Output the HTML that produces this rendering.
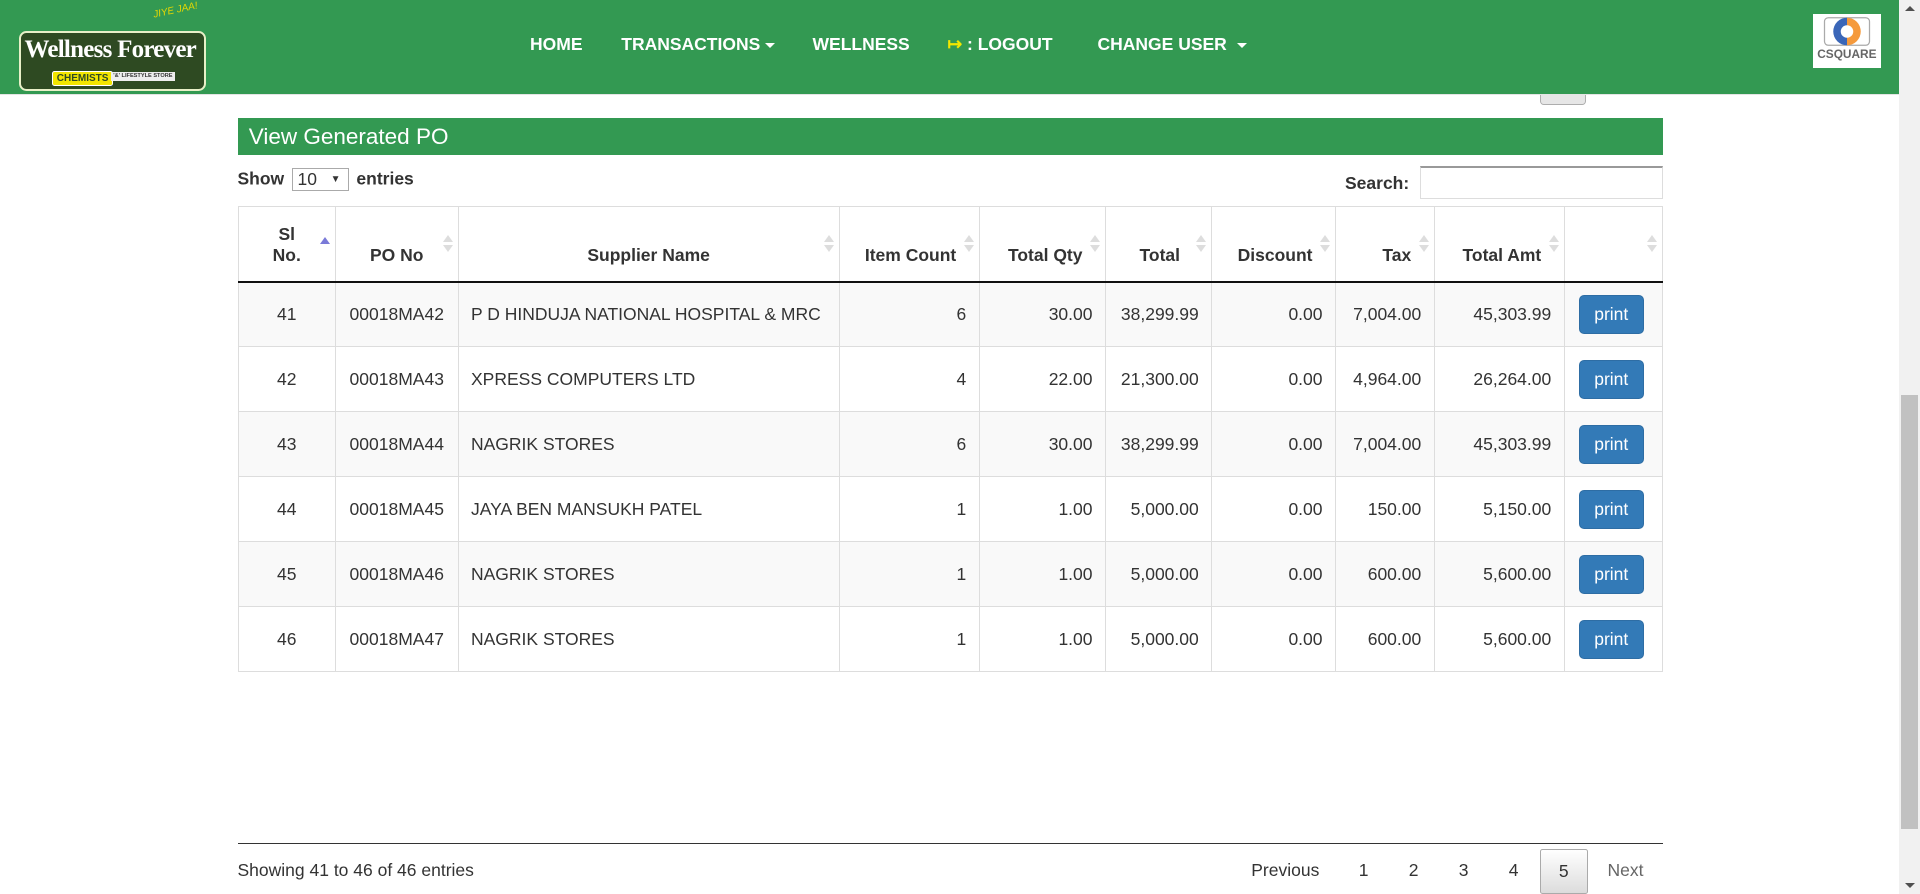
<!DOCTYPE html>
<html><head><meta charset="utf-8">
<style>
html,body{margin:0;padding:0;}
body{width:1536px;height:715px;overflow:hidden;zoom:1.25;font-family:"Liberation Sans",Arial,sans-serif;font-size:14px;color:#333;background:#fff;position:relative;}
.hdr{position:absolute;left:0;top:0;width:1519px;height:75px;background:#339952;border-bottom:1px solid #e4e4e4;z-index:2}
.logo{position:absolute;left:15px;top:25px;width:150px;height:48px;background:#2e4a22;border:2px solid #e8f0c8;border-radius:6px;box-sizing:border-box}
.logo .t{position:absolute;left:3px;top:2px;color:#fff;font-family:"Liberation Serif",serif;font-size:20px;font-weight:bold;white-space:nowrap;letter-spacing:-0.6px}
.logo .c{position:absolute;left:25px;top:30px;background:#f2e600;color:#2e4a22;font-weight:bold;font-size:8px;padding:1px 3px;border:1px solid #fff;border-radius:2px}
.logo .l{position:absolute;left:72px;top:31px;background:#eee;color:#333;font-size:4.5px;padding:1px 2px;font-weight:bold}
.dots{position:absolute;left:134px;top:18px}
.dots span{display:inline-block;width:6px;height:6px;border-radius:50%;margin-right:1px}
.jj{position:absolute;left:122px;top:4px;color:#e8d800;font-style:italic;font-size:8px;transform:rotate(-12deg)}
.nav{position:absolute;top:27px;color:#fff;font-weight:bold;font-size:14px;white-space:nowrap}
.caret{display:inline-block;border-top:4px solid #fff;border-left:4px solid transparent;border-right:4px solid transparent;vertical-align:middle;margin-left:4px}
.cs{position:absolute;left:1450px;top:11px;width:55px;height:43px;background:#fff;text-align:center;font-size:9.5px;font-weight:bold;color:#666}
.smallbtn{position:absolute;left:1232px;top:70px;width:37px;height:14px;background:#e6e6e6;border:1px solid #adadad;border-radius:3px;box-sizing:border-box}
.title{position:absolute;left:190px;top:94px;width:1140px;height:30px;background:#339952;color:#fff;font-size:18px;line-height:30px;padding-left:9px;box-sizing:border-box}
.show{position:absolute;left:190px;top:134px;font-weight:bold}
.sel{display:inline-block;width:46px;height:19px;border:1px solid #aaa;vertical-align:middle;font-weight:normal;box-sizing:border-box;padding-left:4px;line-height:17px;position:relative;margin:0 2px}
.sel:after{content:"▼";position:absolute;right:6px;top:0;font-size:8px}
.search{position:absolute;left:1076px;top:138px;font-weight:bold}
.inp{position:absolute;left:1136px;top:133px;width:194px;height:26px;border:1px solid #ddd;border-top:2px solid #999;box-sizing:border-box}
table{position:absolute;left:190px;top:165px;border-collapse:collapse;width:1140px}
td,th{border:1px solid #ddd;padding:0 10px;box-sizing:border-box}
th{height:60px;border-bottom:2px solid #111;position:relative;font-weight:bold;vertical-align:bottom;padding-bottom:12px}
td{height:52px}
tbody tr:nth-child(odd){background:#f9f9f9}
.s{position:absolute;right:8px;top:22px;width:0;height:0}
.s:before{content:"";position:absolute;left:-4px;top:0;border-bottom:6px solid #ddd;border-left:4px solid transparent;border-right:4px solid transparent}
.s:after{content:"";position:absolute;left:-4px;top:8px;border-top:6px solid #ddd;border-left:4px solid transparent;border-right:4px solid transparent}
.sa:before{border-bottom-color:#7a7ad8;top:2px}.sa:after{display:none}
.c{text-align:center}.r{text-align:right}
.btn{display:inline-block;background:#337ab7;border:1px solid #2e6da4;color:#fff;border-radius:4px;width:52px;height:31px;line-height:30px;text-align:center;box-sizing:border-box}
.foot{position:absolute;left:190px;top:674px;width:1140px;border-top:1px solid #333}
.showing{position:absolute;left:190px;top:688px}
.pg{position:absolute;top:688px}
.cur{position:absolute;left:1232px;top:679px;width:38px;height:36px;border:1px solid #aaa;box-sizing:border-box;background:linear-gradient(#fff,#dcdcdc);border-radius:2px;text-align:center;line-height:34px}
.sb{position:absolute;left:1519px;top:0;width:17px;height:715px;background:#f1f1f1}
.th{position:absolute;left:2px;top:316px;width:13px;height:347px;background:#c1c1c1}
</style></head><body>
<div class="hdr">
 <div class="jj">JIYE JAA!</div>
 <div class="dots"><span style="background:#3a8fd8"></span><span style="background:#8cc63f"></span><span style="background:#f7941d"></span></div>
 <div class="logo"><div class="t">Wellness Forever</div><div class="c">CHEMISTS</div><div class="l">'&' LIFESTYLE STORE</div></div>
 <div class="nav" style="left:424px">HOME</div>
 <div class="nav" style="left:497px">TRANSACTIONS<span class="caret"></span></div>
 <div class="nav" style="left:650px">WELLNESS</div>
 <div class="nav" style="left:758px"><span style="color:#f2e600">&#x21A6;</span> : LOGOUT</div>
 <div class="nav" style="left:878px">CHANGE USER <span class="caret"></span></div>
 <div class="cs"><svg width="40" height="28" viewBox="0 0 40 28"><rect x="2" y="3" width="36" height="22" rx="3" fill="none" stroke="#aaa"/><path d="M20 3 A11 11 0 0 0 20 25 Z" fill="#3a66b8"/><path d="M20 3 A11 11 0 0 1 20 25 Z" fill="#f59a3c"/><circle cx="20" cy="14" r="5" fill="#fff"/></svg><div style="margin-top:-4px">CSQUARE</div></div>
</div>
<div class="smallbtn"></div>
<div class="title">View Generated PO</div>
<div class="show">Show <span class="sel">10</span> entries</div>
<div class="search">Search:</div><div class="inp"></div>
<table>
<thead><tr>
<th class="c" style="width:78px">Sl<br>No.<span class="s sa"></span></th>
<th class="c" style="width:98px">PO No<span class="s"></span></th>
<th class="c" style="width:305px">Supplier Name<span class="s"></span></th>
<th class="r" style="width:112px;padding-right:18px">Item Count<span class="s"></span></th>
<th class="r" style="width:101px;padding-right:18px">Total Qty<span class="s"></span></th>
<th class="r" style="width:85px;padding-right:25px">Total<span class="s"></span></th>
<th class="r" style="width:99px;padding-right:18px">Discount<span class="s"></span></th>
<th class="r" style="width:79px;padding-right:18px">Tax<span class="s"></span></th>
<th class="r" style="width:104px;padding-right:18px">Total Amt<span class="s"></span></th>
<th><span class="s"></span></th>
</tr></thead>
<tbody>
<tr><td class="c">41</td><td class="c">00018MA42</td><td>P D HINDUJA NATIONAL HOSPITAL &amp; MRC</td><td class="r">6</td><td class="r">30.00</td><td class="r">38,299.99</td><td class="r">0.00</td><td class="r">7,004.00</td><td class="r">45,303.99</td><td class="c" style="padding-right:13px"><span class="btn">print</span></td></tr>
<tr><td class="c">42</td><td class="c">00018MA43</td><td>XPRESS COMPUTERS LTD</td><td class="r">4</td><td class="r">22.00</td><td class="r">21,300.00</td><td class="r">0.00</td><td class="r">4,964.00</td><td class="r">26,264.00</td><td class="c" style="padding-right:13px"><span class="btn">print</span></td></tr>
<tr><td class="c">43</td><td class="c">00018MA44</td><td>NAGRIK STORES</td><td class="r">6</td><td class="r">30.00</td><td class="r">38,299.99</td><td class="r">0.00</td><td class="r">7,004.00</td><td class="r">45,303.99</td><td class="c" style="padding-right:13px"><span class="btn">print</span></td></tr>
<tr><td class="c">44</td><td class="c">00018MA45</td><td>JAYA BEN MANSUKH PATEL</td><td class="r">1</td><td class="r">1.00</td><td class="r">5,000.00</td><td class="r">0.00</td><td class="r">150.00</td><td class="r">5,150.00</td><td class="c" style="padding-right:13px"><span class="btn">print</span></td></tr>
<tr><td class="c">45</td><td class="c">00018MA46</td><td>NAGRIK STORES</td><td class="r">1</td><td class="r">1.00</td><td class="r">5,000.00</td><td class="r">0.00</td><td class="r">600.00</td><td class="r">5,600.00</td><td class="c" style="padding-right:13px"><span class="btn">print</span></td></tr>
<tr><td class="c">46</td><td class="c">00018MA47</td><td>NAGRIK STORES</td><td class="r">1</td><td class="r">1.00</td><td class="r">5,000.00</td><td class="r">0.00</td><td class="r">600.00</td><td class="r">5,600.00</td><td class="c" style="padding-right:13px"><span class="btn">print</span></td></tr>
</tbody></table>
<div class="foot"></div>
<div class="showing">Showing 41 to 46 of 46 entries</div>
<div class="pg" style="left:1001px">Previous</div>
<div class="pg" style="left:1087px">1</div>
<div class="pg" style="left:1127px">2</div>
<div class="pg" style="left:1167px">3</div>
<div class="pg" style="left:1207px">4</div>
<div class="cur">5</div>
<div class="pg" style="left:1286px;color:#666">Next</div>
<div class="sb"><div style="position:absolute;left:5px;top:5px;border-bottom:4px solid #505050;border-left:4px solid transparent;border-right:4px solid transparent"></div><div class="th"></div><div style="position:absolute;left:5px;bottom:5px;border-top:4px solid #505050;border-left:4px solid transparent;border-right:4px solid transparent"></div></div>
</body></html>
